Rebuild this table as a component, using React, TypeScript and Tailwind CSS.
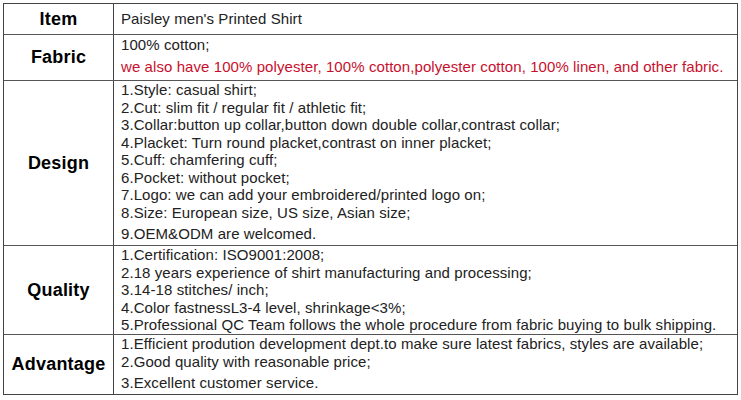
import React from "react";

const font = { fontFamily: '"Liberation Sans", Arial, sans-serif' };

function Row({
  label,
  height,
  children,
  first,
  pt,
}: {
  label: string;
  height: string;
  children: React.ReactNode;
  first?: boolean;
  pt?: string;
}) {
  return (
    <div className={`flex ${height} ${first ? "" : "border-t border-[#555]"}`}>
      <div className="w-[110px] shrink-0 border-r border-[#444] flex items-center justify-center text-[18px] font-bold text-black tracking-[0.2px]">
        {label}
      </div>
      <div className={`flex-1 pl-[7px] text-[15px] leading-[17.5px] text-[#222] tracking-[0.08px] whitespace-nowrap ${pt ?? ""}`}>
        {children}
      </div>
    </div>
  );
}

export default function App() {
  return (
    <div className="bg-white w-[741px] h-[400px] pt-[3px] pl-[3px]" style={font}>
      <div className="w-[735px] border border-[#444]">
        <Row label="Item" height="h-[30px]" first pt="pt-[6px]">
          <div>Paisley men's Printed Shirt</div>
        </Row>
        <Row label="Fabric" height="h-[46px]" pt="pt-[1px]">
          <div>100% cotton;</div>
          <div className="mt-[4.5px] text-[#c8102e]">
            we also have 100% polyester, 100% cotton,polyester cotton, 100% linen, and other fabric.
          </div>
        </Row>
        <Row label="Design" height="h-[165px]" pt="pt-0">
          <div>1.Style: casual shirt;</div>
          <div>2.Cut: slim fit / regular fit / athletic fit;</div>
          <div>3.Collar:button up collar,button down double collar,contrast collar;</div>
          <div>4.Placket: Turn round placket,contrast on inner placket;</div>
          <div>5.Cuff: chamfering cuff;</div>
          <div>6.Pocket: without pocket;</div>
          <div>7.Logo: we can add your embroidered/printed logo on;</div>
          <div>8.Size: European size, US size, Asian size;</div>
          <div className="mt-[3.5px]">9.OEM&amp;ODM are welcomed.</div>
        </Row>
        <Row label="Quality" height="h-[89px]" pt="pt-0">
          <div>1.Certification: ISO9001:2008;</div>
          <div>2.18 years experience of shirt manufacturing and processing;</div>
          <div>3.14-18 stitches/ inch;</div>
          <div>4.Color fastnessL3-4 level, shrinkage&lt;3%;</div>
          <div>5.Professional QC Team follows the whole procedure from fabric buying to bulk shipping.</div>
        </Row>
        <Row label="Advantage" height="h-[60px]" pt="pt-0">
          <div>1.Efficient prodution development dept.to make sure latest fabrics, styles are available;</div>
          <div>2.Good quality with reasonable price;</div>
          <div className="mt-[3.5px]">3.Excellent customer service.</div>
        </Row>
      </div>
    </div>
  );
}
